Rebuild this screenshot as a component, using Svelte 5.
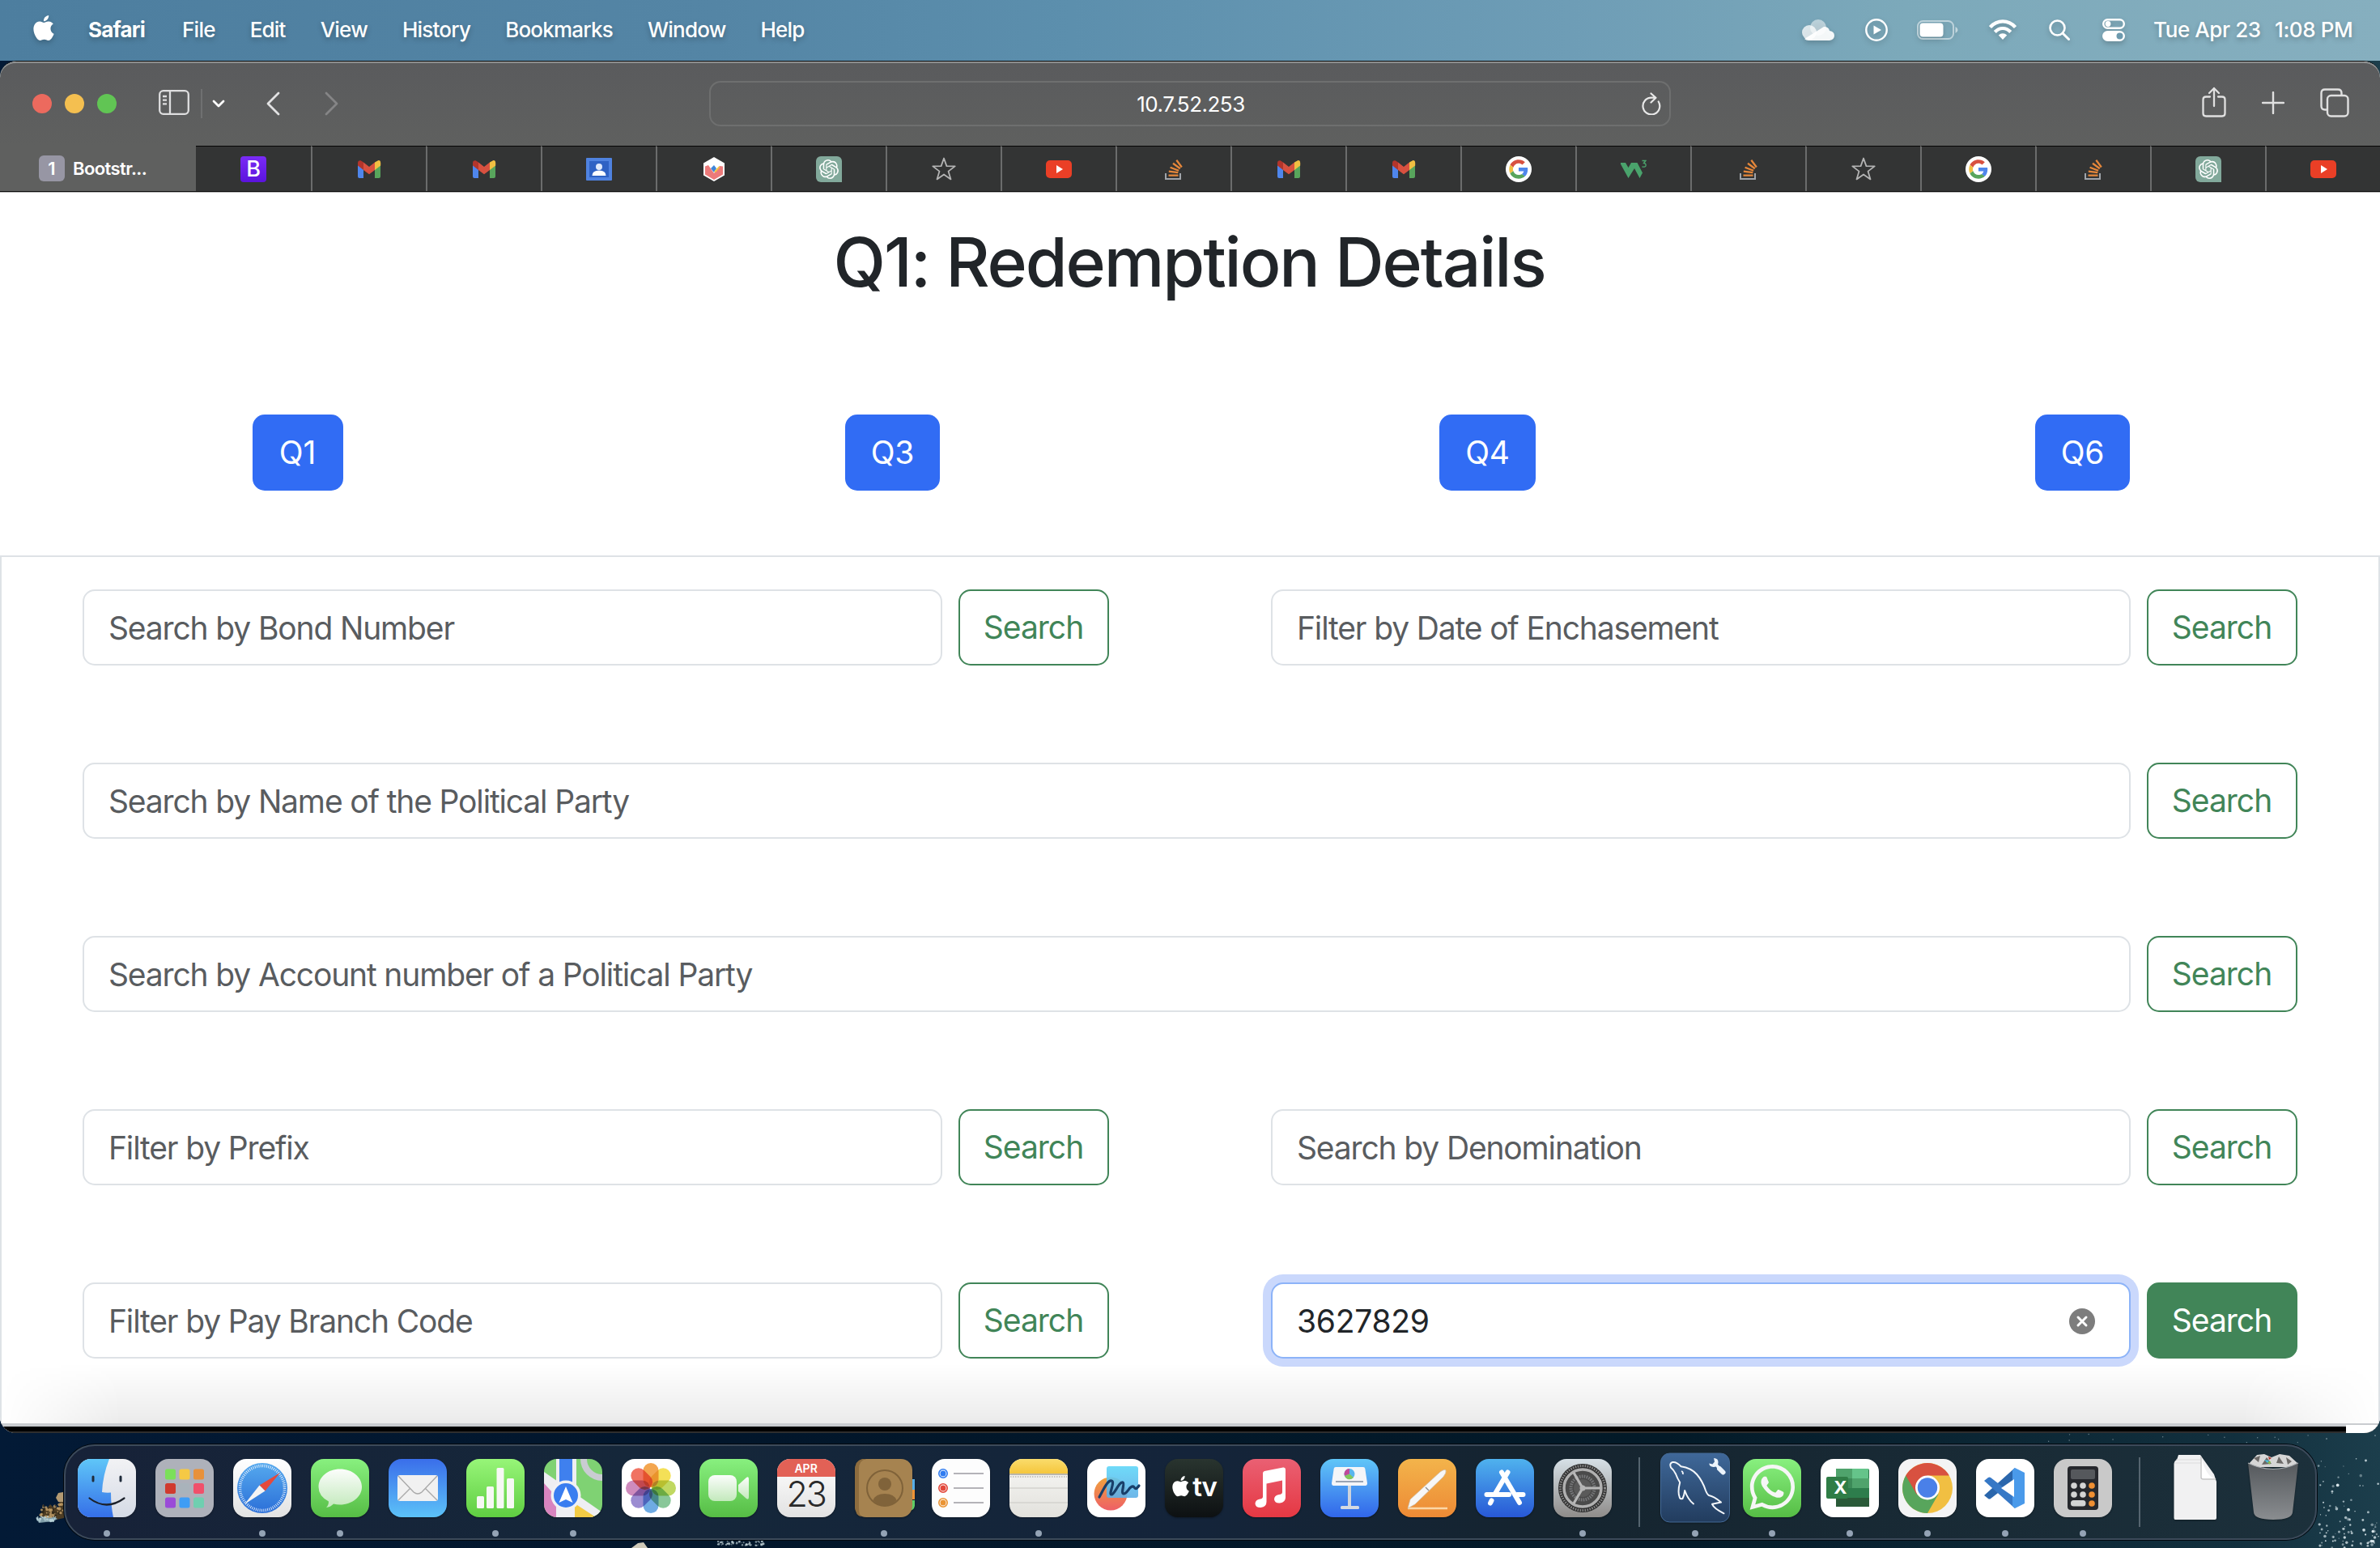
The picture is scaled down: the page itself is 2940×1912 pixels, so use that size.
<script>
  const menus = ['File', 'Edit', 'View', 'History', 'Bookmarks', 'Window', 'Help'];

  const tabs = [
    'bootstrap', 'gmail', 'gmail', 'contacts', 'cube', 'gpt', 'star', 'youtube', 'stack', 'gmail',
    'gmail', 'google', 'w3', 'stack', 'star', 'google', 'stack', 'gpt', 'youtube'
  ];

  const queries = ['Q1', 'Q3', 'Q4', 'Q6'];

  const rows = [
    [{ label: 'Search by Bond Number' }, { label: 'Filter by Date of Enchasement' }],
    [{ label: 'Search by Name of the Political Party' }],
    [{ label: 'Search by Account number of a Political Party' }],
    [{ label: 'Filter by Prefix' }, { label: 'Search by Denomination' }],
    [{ label: 'Filter by Pay Branch Code' }, { label: 'Search', value: '3627829', focus: true }]
  ];

  const dock = [
    [
      { name: 'finder', on: true }, { name: 'launchpad' }, { name: 'safari', on: true },
      { name: 'messages', on: true }, { name: 'mail' }, { name: 'numbers', on: true },
      { name: 'maps', on: true }, { name: 'photos' }, { name: 'facetime' }, { name: 'calendar' },
      { name: 'contacts', on: true }, { name: 'reminders' }, { name: 'notes', on: true },
      { name: 'freeform' }, { name: 'tv' }, { name: 'music' }, { name: 'keynote' },
      { name: 'pages' }, { name: 'appstore' }, { name: 'settings', on: true }
    ],
    [
      { name: 'mysql', on: true }, { name: 'whatsapp', on: true }, { name: 'excel', on: true },
      { name: 'chrome', on: true }, { name: 'vscode', on: true }, { name: 'calculator', on: true }
    ],
    [{ name: 'document' }, { name: 'trash' }]
  ];

  const launchColors = ['#7be05a', '#f5c945', '#e8913a', '#d03a2e', '#a9b3bb', '#f0506a', '#9a4bd8', '#3f9df5', '#6fcfb0'];
  const petals = ['#f29a38', '#f3dc3f', '#b7d34b', '#79c08b', '#5b9fe0', '#8d7ccb', '#c77bb4', '#ee5f4c'];

  // Sea spray: a small seeded generator keeps the flecks stable between loads.
  let seed = 7;
  const rnd = () => (seed = (seed * 16807) % 2147483647) / 2147483647;
  const flecks = [];
  for (let i = 0; i < 100; i++) {
    const t = rnd();
    flecks.push({ x: 2864 + rnd() * 76, y: 1772 + Math.sqrt(t) * 140, r: 0.5 + rnd() * 1.4, o: 0.35 + rnd() * 0.6, c: '#e2eef2' });
  }
  for (let i = 0; i < 14; i++) flecks.push({ x: 2530 + rnd() * 400, y: 1771 + rnd() * 11, r: 0.7, o: 0.5, c: '#d6e6ec' });
  for (let i = 0; i < 60; i++) flecks.push({ x: 885 + rnd() * 65, y: 1903 + rnd() * 6, r: 0.5 + rnd(), o: 0.6, c: '#cfe0e2' });
  for (let i = 0; i < 45; i++) flecks.push({ x: 50 + rnd() * 28, y: 1858 + rnd() * 16, r: 0.8 + rnd() * 1.2, o: 0.8, c: rnd() > 0.5 ? '#caa56c' : '#2a2418' });
  for (let i = 0; i < 40; i++) flecks.push({ x: 46 + rnd() * 24, y: 1873 + rnd() * 6, r: 0.6 + rnd(), o: 0.8, c: '#b9d3da' });

  const apple = 'M12.152 6.896c-.948 0-2.415-1.078-3.96-1.04-2.04.027-3.91 1.183-4.961 3.014-2.117 3.675-.546 9.103 1.519 12.09 1.013 1.454 2.208 3.09 3.792 3.039 1.52-.065 2.09-.987 3.935-.987 1.831 0 2.35.987 3.96.948 1.637-.026 2.676-1.48 3.676-2.948 1.156-1.688 1.636-3.325 1.662-3.415-.039-.013-3.182-1.221-3.22-4.857-.026-3.04 2.48-4.494 2.597-4.559-1.429-2.09-3.623-2.324-4.39-2.376-2-.156-3.675 1.09-4.61 1.09zM15.53 3.83c.843-1.012 1.4-2.427 1.245-3.83-1.207.052-2.662.805-3.532 1.818-.78.896-1.454 2.338-1.273 3.714 1.338.104 2.715-.688 3.559-1.701';
  const knot = 'M22.2819 9.8211a5.9847 5.9847 0 0 0-.5157-4.9108 6.0462 6.0462 0 0 0-6.5098-2.9A6.0651 6.0651 0 0 0 4.9807 4.1818a5.9847 5.9847 0 0 0-3.9977 2.9 6.0462 6.0462 0 0 0 .7427 7.0966 5.98 5.98 0 0 0 .511 4.9107 6.051 6.051 0 0 0 6.5146 2.9001A5.9847 5.9847 0 0 0 13.2599 24a6.0557 6.0557 0 0 0 5.7718-4.2058 5.9894 5.9894 0 0 0 3.9977-2.9001 6.0557 6.0557 0 0 0-.7475-7.0729zm-9.022 12.6081a4.4755 4.4755 0 0 1-2.8764-1.0408l.1419-.0804 4.7783-2.7582a.7948.7948 0 0 0 .3927-.6813v-6.7369l2.02 1.1686a.071.071 0 0 1 .038.052v5.5826a4.504 4.504 0 0 1-4.4945 4.4944zm-9.6607-4.1254a4.4708 4.4708 0 0 1-.5346-3.0137l.142.0852 4.783 2.7582a.7712.7712 0 0 0 .7806 0l5.8428-3.3685v2.3324a.0804.0804 0 0 1-.0332.0615L9.74 19.9502a4.4992 4.4992 0 0 1-6.1408-1.6464zM2.3408 7.8956a4.485 4.485 0 0 1 2.3655-1.9728V11.6a.7664.7664 0 0 0 .3879.6765l5.8144 3.3543-2.0201 1.1685a.0757.0757 0 0 1-.071 0l-4.8303-2.7865A4.504 4.504 0 0 1 2.3408 7.872zm16.5963 3.8558L13.1038 8.364 15.1192 7.2a.0757.0757 0 0 1 .071 0l4.8303 2.7913a4.4944 4.4944 0 0 1-.6765 8.1042v-5.6772a.79.79 0 0 0-.407-.667zm2.0107-3.0231l-.142-.0852-4.7735-2.7818a.7759.7759 0 0 0-.7854 0L9.409 9.2297V6.8974a.0662.0662 0 0 1 .0284-.0615l4.8303-2.7866a4.4992 4.4992 0 0 1 6.6802 4.66zM8.3065 12.863l-2.02-1.1638a.0804.0804 0 0 1-.038-.0567V6.0742a4.4992 4.4992 0 0 1 7.3757-3.4537l-.142.0805L8.704 5.459a.7948.7948 0 0 0-.3927.6813zm1.0976-2.3654l2.602-1.4998 2.6069 1.4998v2.9994l-2.5974 1.4997-2.6067-1.4997Z';
  const whatsapp = 'M17.472 14.382c-.297-.149-1.758-.867-2.03-.967-.273-.099-.471-.148-.67.15-.197.297-.767.966-.94 1.164-.173.199-.347.223-.644.075-.297-.15-1.255-.463-2.39-1.475-.883-.788-1.48-1.761-1.653-2.059-.173-.297-.018-.458.13-.606.134-.133.298-.347.446-.52.149-.174.198-.298.298-.497.099-.198.05-.371-.025-.52-.075-.149-.669-1.612-.916-2.207-.242-.579-.487-.5-.669-.51-.173-.008-.371-.01-.57-.01-.198 0-.52.074-.792.372-.272.297-1.04 1.016-1.04 2.479 0 1.462 1.065 2.875 1.213 3.074.149.198 2.096 3.2 5.077 4.487.709.306 1.262.489 1.694.625.712.227 1.36.195 1.871.118.571-.085 1.758-.719 2.006-1.413.248-.694.248-1.289.173-1.413-.074-.124-.272-.198-.57-.347m-5.421 7.403h-.004a9.87 9.87 0 01-5.031-1.378l-.361-.214-3.741.982.998-3.648-.235-.374a9.86 9.86 0 01-1.51-5.26c.001-5.45 4.436-9.884 9.888-9.884 2.64 0 5.122 1.03 6.988 2.898a9.825 9.825 0 012.893 6.994c-.003 5.45-4.437 9.884-9.885 9.884m8.413-18.297A11.815 11.815 0 0012.05 0C5.495 0 .16 5.335.157 11.892c0 2.096.547 4.142 1.588 5.945L.057 24l6.305-1.654a11.882 11.882 0 005.683 1.448h.005c6.554 0 11.89-5.335 11.893-11.893a11.821 11.821 0 00-3.48-8.413z';
</script>

{#snippet favicon(name)}
  <svg class="favicon" viewBox="0 0 32 32">
    {#if name === 'bootstrap'}
      <rect width="32" height="32" rx="4" fill="url(#g-boot)" />
    {:else if name === 'gmail'}
      <path d="M2 27V9l7 5v13H4a2 2 0 0 1-2-2z" fill="#4f86ec" />
      <path d="M30 27V9l-7 5v13h5a2 2 0 0 0 2-2z" fill="#58a55c" />
      <path d="M23 7.5 27 5.2q3-.6 3.2 3V11.500L23 17z" fill="#f1bf42" />
      <path d="M9 7.500 5.500 5.200Q2 4.900 2 8.500v3L9 17z" fill="#b3352b" />
      <path d="M9 7.500 16 13l7-5.500V17l-7 5.200L9 17z" fill="#d85140" />
    {:else if name === 'contacts'}
      <rect y="2" width="32" height="28" rx="1" fill="#4f82e0" />
      <rect x="4" y="6" width="24" height="20" fill="#2f62c4" />
      <circle cx="16" cy="13" r="4" fill="#dfe9fb" />
      <path d="M7.500 24q0-6.500 8.500-6.500t8.500 6.500z" fill="#fff" />
    {:else if name === 'cube'}
      <path d="M16 1 29 8.500v15L16 31 3 23.500v-15z" fill="#fff" />
      <path d="M5 12.500 9 11l7 10 7-9 4 .5v10L16 29 5 22.500z" fill="#ec7a7a" />
      <path d="m12 15 4-4 3 4-3 5z" fill="#3f86d8" />
      <path d="m19.500 15 3-3 .5 2-5 6-2-1z" fill="#f4c542" />
    {:else if name === 'gpt'}
      <path d="M6 0h20a6 6 0 0 1 6 6v26H6a6 6 0 0 1-6-6V6a6 6 0 0 1 6-6z" fill="#82a99b" />
      <path d={knot} transform="translate(4 4)" fill="#fff" />
    {:else if name === 'star'}
      <path d="m16 2.500 3.400 9.600 10.300.3-8.200 6.200 3 9.800L16 22.500l-8.500 5.900 3-9.800-8.200-6.200 10.300-.3z" fill="none" stroke="#b4b4b4" stroke-width="1.800" stroke-linejoin="round" />
    {:else if name === 'youtube'}
      <rect y="5" width="32" height="22" rx="5" fill="#ea3f26" />
      <path d="m13 11 8 5-8 5z" fill="#fff" />
    {:else if name === 'stack'}
      <path d="M6 21v7h18v-7" fill="none" stroke="#a0a4aa" stroke-width="2" />
      <path d="M9.500 23.700h12M9.800 18.600l11.500 1.500M11.600 13.700l10.500 4M15 8.800l8.800 6.400M19.300 4.800l6.500 8.700" stroke="#e6873a" stroke-width="2.300" fill="none" />
    {:else if name === 'google'}
      <circle cx="16" cy="16" r="16" fill="#fff" />
      <g transform="translate(4.200 4.200) scale(.49)">
        <path fill="#d85140" d="M24 9.500c3.540 0 6.710 1.220 9.210 3.600l6.850-6.850C35.900 2.380 30.470 0 24 0 14.620 0 6.510 5.380 2.560 13.220l7.980 6.190C12.430 13.720 17.740 9.500 24 9.500z" />
        <path fill="#4f86ec" d="M46.980 24.550c0-1.570-.15-3.090-.38-4.550H24v9.020h12.940c-.58 2.960-2.260 5.480-4.780 7.180l7.730 6c4.510-4.180 7.090-10.360 7.090-17.650z" />
        <path fill="#f1bf42" d="M10.530 28.590c-.48-1.450-.76-2.990-.76-4.590s.27-3.140.76-4.590l-7.980-6.190C.92 16.460 0 20.120 0 24c0 3.880.92 7.540 2.560 10.780l7.970-6.190z" />
        <path fill="#58a55c" d="M24 48c6.480 0 11.930-2.130 15.890-5.810l-7.730-6c-2.150 1.450-4.920 2.300-8.160 2.300-6.260 0-11.570-4.220-13.470-9.910l-7.980 6.190C6.510 42.620 14.620 48 24 48z" />
      </g>
    {:else if name === 'w3'}
      <path d="M-1 8h7l3.500 6L13 8h7.500l6.500 12.500-3.500 6.500-6.500-12L9.500 27z" fill="#4aa36c" />
      <path d="M26.500 5.500H31l-2.500 3q2.700.2 2.700 2.500 0 2.700-4.700 2" fill="none" stroke="#4aa36c" stroke-width="1.300" />
    {/if}
  </svg>
  {#if name === 'bootstrap'}<span class="letter-b">B</span>{/if}
{/snippet}

{#snippet appIcon(name)}
  <svg class="app" viewBox="0 0 72 72">
    {#if name === 'finder'}
      <g clip-path="url(#tile)">
        <rect width="72" height="72" fill="url(#g-finder-r)" />
        <path d="M0 0h39Q31 20 30 41q5 1 11 .5Q41 58 44 72H0z" fill="url(#g-finder)" />
      </g>
      <path d="M19 22v5M53 22v5" stroke="#1f2b3a" stroke-width="3" stroke-linecap="round" />
      <path d="M14.500 48.500q21 16 43 0" fill="none" stroke="#1c222c" stroke-width="2.200" stroke-linecap="round" />
    {:else if name === 'launchpad'}
      <rect width="72" height="72" rx="16" fill="#aeb1ba" />
      {#each launchColors as color, i}
        <rect x={12 + (i % 3) * 17.500} y={12.500 + Math.floor(i / 3) * 17.500} width="13" height="13" rx="2.500" fill={color} />
      {/each}
    {:else if name === 'safari'}
      <rect width="72" height="72" rx="16" fill="url(#g-white)" />
      <circle cx="36" cy="36" r="31" fill="url(#g-safari)" />
      <circle cx="36" cy="36" r="27.500" fill="none" stroke="#fff" stroke-width="3.600" stroke-dasharray=".9 1.500" opacity=".85" />
      <path d="M58 17 39.500 39.500 32.500 32.500z" fill="#e4493d" />
      <path d="M14 56l18.500-23.500 7 7z" fill="#f4f4f4" />
    {:else if name === 'messages'}
      <rect width="72" height="72" rx="16" fill="url(#g-green)" />
      <path d="M36 12.500c15 0 27 9.700 27 22S51 56.500 36 56.500q-4 0-8-1-4 4-9 4.500 3-3 3-7.500Q9.500 46 9.500 34.500c0-12.300 11.500-22 26.500-22z" fill="url(#g-bubble)" />
    {:else if name === 'mail'}
      <rect width="72" height="72" rx="16" fill="url(#g-mail)" />
      <rect x="11" y="20" width="50" height="32" rx="3" fill="#f1f1f1" />
      <path d="m12 21 19 20q5 4 10 0l19-20M12 51l15-15M60 51 45 36" fill="none" stroke="#a9a9a9" stroke-width="1.400" />
    {:else if name === 'numbers'}
      <rect width="72" height="72" rx="16" fill="url(#g-numbers)" />
      <g fill="#f6f8f4">
        <rect x="13" y="46" width="9" height="15" rx="1.500" /><rect x="25" y="34" width="9" height="27" rx="1.500" />
        <rect x="37.500" y="11" width="9" height="50" rx="1.500" /><rect x="50" y="24" width="9" height="37" rx="1.500" />
      </g>
    {:else if name === 'maps'}
      <g clip-path="url(#tile)">
        <rect width="72" height="72" fill="#7fd273" />
        <path d="M0 28 16 40v32H0z" fill="#d884bf" />
        <path d="M0 16 72 66v6H38L0 30z" fill="#eeeef2" />
        <path d="M15 0h25v72H15z" fill="#eeeef2" />
        <path d="M19 0h16v40H19z" fill="#3f80ee" />
        <circle cx="72" cy="0" r="23" fill="none" stroke="#c9ccd2" stroke-width="8" />
        <path d="M38 55 64 72H38z" fill="#f3cb45" />
      </g>
      <circle cx="27" cy="45" r="18.500" fill="#f1f1f4" /><circle cx="27" cy="45" r="15" fill="#3a7df0" />
      <path d="m27 34 8.500 20-8.500-4-8.500 4z" fill="#fff" />
    {:else if name === 'photos'}
      <rect width="72" height="72" rx="16" fill="#fff" />
      <g class="petals">
        {#each petals as color, i}
          <rect x="26.500" y="5" width="19" height="30" rx="9.500" fill={color} transform={`rotate(${i * 45} 36 36)`} />
        {/each}
      </g>
    {:else if name === 'facetime'}
      <rect width="72" height="72" rx="16" fill="url(#g-green)" />
      <rect x="11" y="20" width="35" height="32" rx="8" fill="url(#g-bubble)" />
      <path d="M48 32 58 23q3-2 3 2v22q0 4-3 2L48 40z" fill="url(#g-bubble)" />
    {:else if name === 'calendar'}
      <g clip-path="url(#tile)"><rect width="72" height="72" fill="url(#g-white)" /><rect width="72" height="22" fill="#e26156" /></g>
    {:else if name === 'contacts'}
      <path d="M66 9q5 2 5 7v6h-5z" fill="#d3d6da" /><path d="M66 25h8v13h-8z" fill="#56aee8" />
      <path d="M66 38h8v12h-8z" fill="#ef9336" /><path d="M66 51h8v7q-1 6-8 6z" fill="#5fce65" />
      <rect width="71" height="72" rx="14" fill="#a68350" /><path d="M14 0H9Q0 2 0 14v44q0 12 9 14-4-2-4-12V12Q5 2 14 0z" fill="#8d6c3e" />
      <circle cx="37" cy="36" r="22" fill="none" stroke="#7f6239" stroke-width="2" />
      <circle cx="37" cy="31" r="8" fill="#80633a" /><path d="M22.500 51q3-8 14.500-8t14.500 8Q45 58 37 58t-14.500-7z" fill="#80633a" />
    {:else if name === 'reminders'}
      <rect width="72" height="72" rx="16" fill="#fdfdfd" />
      {#each ['#2f7bf0', '#e2473a', '#ea9434'] as color, i}
        <circle cx="14" cy={18 + i * 18} r="5.200" fill="#fff" stroke={color} stroke-width="1.600" />
        <circle cx="14" cy={18 + i * 18} r="3.500" fill={color} />
        <path d={`M27 ${18 + i * 18}h37`} stroke="#b4b3b8" stroke-width="1.800" />
      {/each}
    {:else if name === 'notes'}
      <g clip-path="url(#tile)">
        <rect width="72" height="72" fill="url(#g-notes)" /><rect width="72" height="18" fill="url(#g-notes-top)" />
        <path d="M0 19h72" stroke="#a7a294" stroke-width="1.500" /><path d="M1 22h70" stroke="#b9b6ae" stroke-width="1.500" stroke-dasharray="1.500 1.500" />
        <path d="M0 36h72M0 54h72" stroke="#d3d2ce" stroke-width="1.500" />
      </g>
    {:else if name === 'freeform'}
      <rect width="72" height="72" rx="16" fill="#fff" />
      <circle cx="29" cy="43" r="20.500" fill="url(#g-free-o)" /><rect x="24" y="9" width="39" height="39" rx="3" fill="url(#g-free-b)" opacity=".9" />
      <path d="M15 47c4-7 10-21 15-20 5 1-4 17 0 17 4 0 9-16 14-15 3 1-3 13 1 14 5 0 7-10 12-9 2 1 2 6 7-1" fill="none" stroke="#193f69" stroke-width="3.200" stroke-linecap="round" />
    {:else if name === 'tv'}
      <rect width="72" height="72" rx="16" fill="url(#g-tv)" />
      <path d={apple} transform="translate(7 21) scale(1.050)" fill="#fff" />
    {:else if name === 'music'}
      <rect width="72" height="72" rx="16" fill="url(#g-music)" />
      <path d="M25 17.500q0-2 2-2.500l23-4.500q3-.5 3 2.500v34.500q0 6-7 7-6 .5-7-4.500 0-5 6-6 4-.5 4-3V26.500L29.500 30.500V53q0 6-7 7-6 .5-7-4.500 0-5 6-6 3.500-.5 3.500-3z" fill="#fff" />
    {:else if name === 'keynote'}
      <rect width="72" height="72" rx="16" fill="url(#g-key)" />
      <path d="M34 32h4v28h-4z" fill="#cdd3dc" /><rect x="25" y="58" width="23" height="4" rx="1.500" fill="#d5dae2" />
      <path d="M19 10h34q2 0 2.300 2L58 30q0 3-2.500 3h-39q-2.500 0-2.500-3l2.700-18q.3-2 2.300-2z" fill="#f4f5f8" />
      <path d="M19 28h34" stroke="#9aa4b4" stroke-width="2" />
      <circle cx="36" cy="18.500" r="6.500" fill="#5ab6ee" /><path d="M36 18.500V12a6.500 6.500 0 0 0-6 9z" fill="#c04a9a" /><path d="M36 18.500 30 21a6.500 6.500 0 0 0 11 2z" fill="#84c85c" />
    {:else if name === 'pages'}
      <rect width="72" height="72" rx="16" fill="url(#g-pages)" />
      <path d="M12 61h49" stroke="#fbd7a6" stroke-width="2.400" />
      <path d="M12 61 15 50 52 16q6-4 7-2 1 3-3 8L21 56z" fill="#f7f7f7" stroke="#c9b9a0" stroke-width=".7" /><path d="m34 35 4 4" stroke="#8b8b8b" stroke-width="1.200" />
    {:else if name === 'appstore'}
      <rect width="72" height="72" rx="16" fill="url(#g-store)" />
      <g stroke="#fff" stroke-width="6" stroke-linecap="round"><path d="M39.500 16.500 24.500 42M19.500 51.500l-1.500 3M32 16.500 54 54M13.500 44H41M51 44h7.500" /></g>
    {:else if name === 'settings'}
      <rect width="72" height="72" rx="16" fill="url(#g-set)" />
      <circle cx="36" cy="36" r="30" fill="#2e2e2e" /><circle cx="36" cy="36" r="27.500" fill="none" stroke="#858585" stroke-width="3" stroke-dasharray="1.600 1.400" />
      <circle cx="36" cy="36" r="23" fill="#4a4a4a" stroke="#b0b0b0" stroke-width="3.500" />
      <circle cx="36" cy="36" r="14.500" fill="none" stroke="#77787a" stroke-width="4" stroke-dasharray="1.600 1.300" /><circle cx="36" cy="36" r="11" fill="#5a5a5a" />
      <path d="M36 36h22M36 36 25 17M36 36 25 55" stroke="#b8b8b8" stroke-width="3.200" /><circle cx="36" cy="36" r="3.500" fill="#b4b4b4" />
    {:else if name === 'mysql'}
      <rect x="-6.500" y="-7" width="85" height="85" rx="11" fill="url(#g-mysql)" stroke="#446a96" />
      <path d="M34 55.500Q27 50 23.200 39q-.7 6-2.700 10-2.500 1-3.500-1-3-7 .2-19Q14 24 12 18.500 9.500 13.500 6 10.500 3.800 5.500 8 4q5-.8 10.500 5.200Q31 11 38 19q7 8 11 20 2 5 4 6 6 1 15 8.500l-11 2.300q2 5 14.500 11.500" fill="none" stroke="#f3f7fb" stroke-width="2" stroke-linejoin="round" stroke-linecap="round" />
      <path d="M19 15q2.500 1 1.800 4" fill="none" stroke="#f3f7fb" stroke-width="1.800" />
      <path d="m61 6 6 7" stroke="#ecf4fc" stroke-width="3.500" /><path d="m66 12 4.500 4.500" stroke="#ecf4fc" stroke-width="6" stroke-linecap="round" />
      <path d="M59-1q6 0 5.500 6-1 5-6 5-5-.5-5.200-4.500l4.200 1 2.500-3z" fill="#ecf4fc" />
    {:else if name === 'whatsapp'}
      <rect width="72" height="72" rx="16" fill="url(#g-green)" />
      <path d={whatsapp} transform="translate(8.500 7) scale(2.320)" fill="#f6f6f6" />
    {:else if name === 'excel'}
      <rect width="72" height="72" rx="16" fill="#fff" />
      <rect x="19" y="12" width="41" height="47" rx="2" fill="#2d7d4c" />
      <path d="M19 12h20v12H19z" fill="#4fa36c" /><path d="M39 12h20v12H39z" fill="#65c48a" /><path d="M19 24h20v12H19z" fill="#3c8a58" /><path d="M39 24h21v12H39z" fill="#4fa36c" /><path d="M19 48h41v11H19z" fill="#2a5a38" />
      <rect x="7" y="22" width="27" height="27" rx="2" fill="#2f7d46" />
    {:else if name === 'chrome'}
      <rect width="72" height="72" rx="16" fill="#f3f3f4" />
      <circle cx="36" cy="36" r="31" fill="#f1bf42" />
      <path d="M36 36 9.200 20.500A31 31 0 0 1 62.800 20.500H36z" fill="#d85140" />
      <path d="M9.200 20.500A31 31 0 0 0 36 67L49.400 43.700 36 36z" fill="#58a55c" /><path d="M9.200 20.500 22.600 43.700 36 51.500 49.400 43.700z" fill="#58a55c" /><path d="M9.200 20.500 22.600 43.700 36 20.500z" fill="#d85140" />
      <circle cx="36" cy="35.500" r="15" fill="#fff" /><circle cx="36" cy="35.500" r="12.200" fill="#4a80e8" />
    {:else if name === 'vscode'}
      <rect width="72" height="72" rx="16" fill="#fff" />
      <path d="m10 45 5 4q1.500 1 3 0L48 26V11z" fill="#2a66ac" /><path d="m10 27 5-4q1.500-1 3 0l30 23v15z" fill="#3678c6" />
      <path d="M48 11 60 17v38l-12 6-3-3V14z" fill="#4a9aea" /><path d="M47 25v22L31 36z" fill="#fff" />
    {:else if name === 'calculator'}
      <rect width="72" height="72" rx="16" fill="#c9c9c9" />
      <rect x="17" y="9" width="38" height="54" rx="4" fill="#26282d" /><rect x="21" y="13" width="30" height="12" rx="2" fill="#55585c" />
      {#each [0, 1, 2] as r}
        <circle cx="47" cy={33 + r * 11} r="3.800" fill="#f08f32" />
        {#if r < 2}<circle cx="25" cy={33 + r * 11} r="3.800" fill="#d4d4d4" /><circle cx="36" cy={33 + r * 11} r="3.800" fill="#d4d4d4" />{/if}
      {/each}
      <rect x="21" y="51" width="18.500" height="7.500" rx="3.500" fill="#d4d4d4" />
    {:else if name === 'document'}
      <path d="M15-5h27l17 24 3 9v45q0 2-2 2H11q-1.500 0-1.500-2V6Q10 2 13 1z" fill="#f1f1f2" />
      <path d="M10 5h33M12 1h31" stroke="#dcdcdc" /><path d="m43-4 1 27q0 2 3 2h15Q48 22 43-4z" fill="#fff" /><path d="M43-3v26q0 2 3 2h15" fill="none" stroke="#c5c5c5" stroke-width="1.400" />
    {:else if name === 'trash'}
      <path d="M6 6 16-5l9-1 9 4 10-4 12 2 10 9-7 5H14z" fill="#d6d6d6" />
      <path d="m12-1 8-3-2 8zM22 7l6-9 6 8zM40 5l3-8 6 9zM52-2l7 5-5 4z" fill="#6d6a68" /><path d="m25 1 6 1-2 3z" fill="#48c4e0" /><path d="m29 4 4-1-1 4z" fill="#8cc64a" /><path d="m30-3 4 2-3 2z" fill="#b1352a" />
      <path d="M5 5q31 15 62 0l-7 61q-1 9-24 9t-24-9z" fill="url(#g-trash)" />
      <path d="M5 5q31 15 62 0" fill="none" stroke="#a9adb1" stroke-width="1.200" />
    {/if}
  </svg>
  {#if name === 'calendar'}<span class="cal-month">APR</span><span class="cal-day">23</span>{/if}
  {#if name === 'tv'}<span class="tv-word">tv</span>{/if}
  {#if name === 'excel'}<span class="excel-x">X</span>{/if}
{/snippet}

{#snippet grad(id, a, b)}
  <linearGradient {id} x1="0" y1="0" x2="0" y2="1"><stop offset="0" stop-color={a} /><stop offset="1" stop-color={b} /></linearGradient>
{/snippet}

<svg class="defs" aria-hidden="true">
  <defs>
    <clipPath id="tile"><rect width="72" height="72" rx="16" /></clipPath>
    {@render grad('g-boot', '#7a2bf5', '#5b13dd')}
    {@render grad('g-finder', '#5fc6f8', '#356fe8')}
    {@render grad('g-finder-r', '#f2f2f4', '#d5dbe6')}
    {@render grad('g-white', '#ffffff', '#e2e2e2')}
    {@render grad('g-safari', '#55a9ee', '#2b6fd8')}
    {@render grad('g-green', '#88f07f', '#56bd45')}
    {@render grad('g-bubble', '#fbfdfb', '#c3e9bc')}
    {@render grad('g-mail', '#3a6eea', '#5cc2f8')}
    {@render grad('g-numbers', '#97f578', '#5fce42')}
    {@render grad('g-notes', '#f8f8f6', '#e2e1dc')}
    {@render grad('g-notes-top', '#fadc6c', '#f5c63c')}
    {@render grad('g-free-o', '#f0a33c', '#ee5f66')}
    {@render grad('g-free-b', '#5fd6f8', '#5eaee6')}
    {@render grad('g-tv', '#29342f', '#0d1012')}
    {@render grad('g-music', '#ea6073', '#e53843')}
    {@render grad('g-key', '#60c6f8', '#3166ea')}
    {@render grad('g-pages', '#f3b44b', '#ed8a35')}
    {@render grad('g-store', '#4fb2ee', '#2858d6')}
    {@render grad('g-set', '#d6e0e6', '#8f8c8a')}
    {@render grad('g-mysql', '#3f6899', '#223c5e')}
    {@render grad('g-trash', '#55595d', '#8a8d90')}
  </defs>
</svg>

<div class="desktop">
  <svg class="sea" viewBox="0 0 2940 1912" aria-hidden="true">
    <path d="m69 1850 3-6 6-1v13l-6-1z" fill="#b39a72" />
    <path d="m50 1874 3-9 6-3 3-4 4 4 6 1 2-8h5v20l-14 3z" fill="#4d3d24" />
    <path d="m46 1877 10-4 12 1 3 2-5 3-18 2z" fill="#7f9da8" />
    <path d="m780 1912 8-6 7-1 5 7z" fill="#cfc9b8" />
    {#each flecks as f}<circle cx={f.x} cy={f.y} r={f.r} opacity={f.o} fill={f.c} />{/each}
  </svg>

  <header class="menubar">
    <nav class="menus">
      <svg class="apple" viewBox="2 0 20 24"><path d={apple} fill="#fff" /></svg>
      <b>Safari</b>
      {#each menus as item}<span>{item}</span>{/each}
    </nav>
    <div class="status">
      <svg class="cloud" viewBox="0 0 40 26">
        <circle cx="20" cy="10" r="10" fill="#fff" opacity=".5" /><circle cx="9" cy="16" r="9" fill="#fff" opacity=".75" />
        <path d="M3 24 27 9q6 0 7 5 6 1 6 6t-6 6H8q-3 0-5-2z" fill="#fff" opacity=".93" />
      </svg>
      <svg class="play" viewBox="0 0 28 28"><circle cx="14" cy="14" r="12.700" fill="none" stroke="#fff" stroke-width="2.400" /><path d="m10.500 8.500 9.500 5.500-9.500 5.500z" fill="#fff" /></svg>
      <svg class="battery" viewBox="0 0 50 24"><rect x="1" y="1" width="44" height="22" rx="6.500" fill="none" stroke="#fff" stroke-width="2" opacity=".5" /><rect x="3.500" y="3.500" width="29" height="17" rx="4" fill="#fff" /><path d="M47.500 8q3 1.500 3 4t-3 4z" fill="#fff" opacity=".55" /></svg>
      <svg class="wifi" viewBox="0 0 34 25"><g fill="none" stroke="#fff" stroke-width="4.200"><path d="M1.500 9.500Q8 2.300 17 2.300t15.500 7.200" /><path d="M7.300 15.500Q11.500 11 17 11t9.700 4.500" /></g><path d="M17 25l-5.200-5.600Q14 17.300 17 17.300t5.200 2.100z" fill="#fff" /></svg>
      <svg class="spot" viewBox="0 0 26 26"><circle cx="10.500" cy="10.500" r="9" fill="none" stroke="#fff" stroke-width="2.600" /><path d="m17 17 7.500 7.500" stroke="#fff" stroke-width="3" stroke-linecap="round" /></svg>
      <svg class="control" viewBox="0 0 28 28"><rect x="1.200" y="1.200" width="25.600" height="10.600" rx="5.300" fill="none" stroke="#fff" stroke-width="2.400" /><circle cx="7" cy="6.500" r="3.400" fill="#fff" /><rect y="15" width="28" height="13" rx="6.500" fill="#fff" /><circle cx="21.500" cy="21.500" r="4" fill="#6d9aae" /></svg>
      <span class="date">Tue Apr 23</span><span class="time">1:08 PM</span>
    </div>
  </header>

  <main class="window">
    <div class="toolbar">
      <div class="left">
        <i class="light red"></i><i class="light yellow"></i><i class="light green"></i>
        <svg class="sidebar" viewBox="0 0 38 31" fill="none" stroke="#dededf" stroke-width="2.300"><rect x="1.200" y="1.200" width="35.600" height="28.600" rx="4.500" /><path d="M14 1v29M5 8h5M5 12.700h5M5 17.400h5" /></svg>
        <i class="rule"></i>
        <svg class="down" viewBox="0 0 16 10"><path d="m2 2 6 6 6-6" fill="none" stroke="#fff" stroke-width="2.800" stroke-linecap="round" stroke-linejoin="round" /></svg>
        <svg class="arrow" viewBox="0 0 18 30"><path d="M16 2 3 15l13 13" fill="none" stroke="#e2e2e3" stroke-width="2.800" stroke-linecap="round" stroke-linejoin="round" /></svg>
        <svg class="arrow" viewBox="0 0 18 30"><path d="m2 2 13 13L2 28" fill="none" stroke="#858586" stroke-width="2.800" stroke-linecap="round" stroke-linejoin="round" /></svg>
      </div>
      <div class="address">
        <span>10.7.52.253</span>
        <svg class="reload" viewBox="0 0 24 28"><path d="M20.700 11.500A10.400 10.400 0 1 1 12 6.600h3M11.500 1.500l6 5.300-6 5.700" fill="none" stroke="#e8e8e8" stroke-width="2.200" stroke-linecap="round" stroke-linejoin="round" /></svg>
      </div>
      <div class="right">
        <svg class="share" viewBox="0 0 30 38" fill="none" stroke="#e0e0e0" stroke-width="2.300" stroke-linecap="round" stroke-linejoin="round"><path d="M10 12.500H5q-3.500 0-3.500 3.500v17q0 3.500 3.500 3.500h20q3.500 0 3.500-3.500V16q0-3.500-3.500-3.500h-5M15 24V2M9 8l6-6 6 6" /></svg>
        <svg class="plus" viewBox="0 0 28 28"><path d="M14 1v26M1 14h26" stroke="#e0e0e0" stroke-width="2.400" stroke-linecap="round" /></svg>
        <svg class="overview" viewBox="0 0 36 36" fill="none" stroke="#e0e0e0" stroke-width="2.400"><rect x="9" y="9" width="25.500" height="25.500" rx="4.500" /><path d="M8.500 26.500H6q-4.500 0-4.500-4.500V6q0-4.500 4.500-4.500h16q4.500 0 4.500 4.500v2.500" /></svg>
      </div>
    </div>

    <div class="tabs">
      <div class="tab current"><span class="badge">1</span><span class="caption">Bootstr...</span></div>
      {#each tabs as tab}
        <div class="tab">{@render favicon(tab)}</div>
      {/each}
    </div>

    <section class="page">
      <h1>Q1: Redemption Details</h1>
      <nav class="queries">
        {#each queries as q}<div><button class="primary">{q}</button></div>{/each}
      </nav>
      <div class="filters">
        {#each rows as row}
          <div class="row">
            {#each row as field}
              <form class="field">
                <div class="control-wrap">
                  <input class:focus={field.focus} type="text" placeholder={field.label} value={field.value ?? ''} />
                  {#if field.focus}
                    <svg class="clear" viewBox="0 0 32 32"><circle cx="16" cy="16" r="16" fill="#7d7d7d" /><path d="m11 11 10 10M21 11 11 21" stroke="#fff" stroke-width="3" stroke-linecap="round" /></svg>
                  {/if}
                </div>
                <button class="outline" class:active={field.focus} type="button">Search</button>
              </form>
            {/each}
          </div>
        {/each}
      </div>
      <div class="shade"></div>
      <div class="edge"><i></i></div>
    </section>
  </main>

  <footer class="dock">
    {#each dock as group, g}
      {#if g}<i class="sep"></i>{/if}
      {#each group as app}
        <div class="slot">{@render appIcon(app.name)}{#if app.on}<i class="dot"></i>{/if}</div>
      {/each}
    {/each}
  </footer>
</div>

<style>
  :global(body) { margin: 0; overflow: hidden; }
  * { box-sizing: border-box; }
  svg { display: block; flex: none; }
  i { display: block; flex: none; }
  .defs { position: absolute; width: 0; height: 0; }

  .desktop {
    position: relative;
    width: 2940px;
    height: 1912px;
    display: flex;
    flex-direction: column;
    align-items: center;
    overflow: hidden;
    font-family: Inter, 'Liberation Sans', sans-serif;
    background: linear-gradient(90deg, #031a36 0, #02162b 30%, #031a28 70%, #12303e 94%, #1c3e4c 100%);
  }
  .sea { position: absolute; inset: 0; }

  .menubar {
    position: relative;
    width: 100%;
    height: 75px;
    flex: none;
    display: flex;
    justify-content: space-between;
    color: #fff;
    font-size: 26px;
    line-height: 73px;
    white-space: nowrap;
    text-shadow: 0 3px 6px rgb(0 0 0 / 25%);
    background: linear-gradient(90deg, #4d7e9f 0, #5485a5 30%, #5c8fad 45%, #6e9db6 66%, #7ca9ba 80%, #86afbf 100%);
  }
  .menubar svg { filter: drop-shadow(0 3px 3px rgb(0 0 0 / 20%)); }
  .menus { display: flex; gap: 43px; padding-left: 41px; font-weight: 500; letter-spacing: -0.78px; }
  .menus b { font-weight: 700; letter-spacing: -0.8px; margin-right: 3px; }
  .apple { width: 26px; height: 31px; margin: 19px -1px 0 0; }
  .status { display: flex; align-items: center; padding-right: 33px; font-weight: 500; height: 73px; }
  .cloud { width: 40px; height: 26px; margin-right: 38px; }
  .play { width: 28px; height: 28px; margin-right: 36px; }
  .battery { width: 50px; height: 24px; margin-right: 39px; overflow: visible; }
  .wifi { width: 34px; height: 25px; margin-right: 40px; }
  .spot { width: 26px; height: 26px; margin-right: 40px; }
  .control { width: 28px; height: 28px; margin-right: 35px; }
  .date { width: 150px; letter-spacing: -0.4px; }
  .time { width: 97px; letter-spacing: -0.4px; }

  .window {
    position: relative;
    width: 100%;
    height: 1695px;
    flex: none;
    display: flex;
    flex-direction: column;
    overflow: hidden;
    border-radius: 20px;
    border-top: 1px solid #111;
    background: #fff;
  }
  .toolbar {
    height: 104px;
    flex: none;
    display: grid;
    grid-template-columns: 1fr 1188px 1fr;
    border-top: 2px solid #8b8c8c;
    border-radius: 20px 20px 0 0;
    background: linear-gradient(#5a5b5d, #5f605f);
    box-shadow: 0 0 0 20px #3b5a6c;
  }
  .left { display: flex; align-items: center; padding-left: 40px; height: 99px; }
  .light { width: 24px; height: 24px; border-radius: 50%; margin-right: 16px; }
  .red { background: #ec6a5e; }
  .yellow { background: #f4bf50; }
  .green { background: #61c554; }
  .sidebar { width: 38px; height: 31px; margin: -2px 14px 0 36px; }
  .rule { width: 2px; height: 36px; background: #6f7071; }
  .down { width: 16px; height: 10px; margin: 0 50px 0 12px; }
  .arrow { width: 18px; height: 30px; margin-right: 55px; }
  .address {
    position: relative;
    height: 56px;
    margin-top: 22px;
    display: flex;
    align-items: center;
    justify-content: center;
    border: 2px solid #6e6f6f;
    border-radius: 14px;
    color: #fff;
    font-size: 26px;
    letter-spacing: -0.5px;
  }
  .address span { margin-left: 2px; }
  .reload { position: absolute; right: 10px; top: 12px; width: 24px; height: 28px; }
  .right { display: flex; justify-content: flex-end; padding-right: 38px; }
  .share { width: 30px; height: 38px; margin: 29px 44px 0 0; }
  .plus { width: 28px; height: 28px; margin: 35px 44px 0 0; }
  .overview { width: 36px; height: 36px; margin-top: 31px; }

  .tabs {
    position: relative;
    height: 57px;
    flex: none;
    display: flex;
    border-bottom: 1px solid #0c0c0c;
  }
  .tab {
    position: relative;
    width: 142px;
    flex: none;
    display: flex;
    align-items: center;
    justify-content: center;
    background: #333434;
    border-top: 1px solid #050505;
    border-left: 2px solid #6b6c6c;
  }
  .tab.current {
    width: 242px;
    justify-content: flex-start;
    gap: 10px;
    padding-left: 48px;
    background: #5f605f;
    border: 0;
    color: #fff;
    font-size: 22px;
    font-weight: 600;
  }
  .tab.current + .tab { border-left: 0; }
  .badge { width: 32px; height: 32px; border-radius: 6px; background: #9796a4; text-align: center; line-height: 32px; }
  .caption { letter-spacing: -0.6px; }
  .favicon { width: 32px; height: 32px; }
  .letter-b { position: absolute; color: #fff; font-size: 27px; font-weight: 500; }

  .page {
    position: relative;
    flex: 1;
    display: flex;
    flex-direction: column;
    border-top: 1px solid #b9b9b9;
    background: #fff;
    color: #212529;
  }
  h1 {
    margin: 0;
    height: 274px;
    padding: 34px 2px 0 0;
    text-align: center;
    font-size: 84px;
    font-weight: 500;
    line-height: 104px;
    letter-spacing: -2.1px;
  }
  .queries { height: 174px; display: grid; grid-template-columns: repeat(4, 1fr); justify-items: center; }
  button {
    height: 94px;
    border-radius: 15px;
    border: 2px solid transparent;
    font: 400 39px/86px Inter, 'Liberation Sans', sans-serif;
    letter-spacing: -1px;
    padding: 0 30px;
  }
  .primary { min-width: 112px; padding: 0 30px; letter-spacing: -0.2px; background: #316cf4; color: #fff; }
  .filters {
    flex: 1;
    display: flex;
    flex-direction: column;
    gap: 120px;
    padding: 40px 100px 0;
    border: 2px solid #dee2e6;
    border-bottom: 0;
  }
  .row { display: grid; grid-auto-flow: column; grid-auto-columns: 1fr; gap: 200px; }
  .field { display: flex; gap: 20px; }
  .control-wrap { position: relative; flex: 1; }
  input {
    width: 100%;
    height: 94px;
    padding: 0 30px;
    border: 2px solid #dee2e6;
    border-radius: 15px;
    outline: 0;
    background: #fff;
    color: #212529;
    font: 400 39px Inter, 'Liberation Sans', sans-serif;
    letter-spacing: -1.15px;
  }
  input::placeholder { color: #595c5f; opacity: 1; }
  input.focus { position: relative; border-color: #8cb3f8; box-shadow: 0 0 0 10px #cad8fc; letter-spacing: -0.3px; }
  .clear { position: absolute; right: 44px; top: 32px; width: 32px; height: 32px; }
  .outline { width: 186px; padding: 0 1px 0 0; background: #fff; border-color: #418558; color: #418558; }
  .outline.active { background: #418558; color: #fff; }

  /* The dock shades the foot of the page. */
  .shade {
    position: absolute;
    inset: auto 0 12px 0;
    height: 74px;
    background: linear-gradient(transparent, rgb(0 0 0 / 8%));
    mask-image: linear-gradient(90deg, transparent 0, #000 150px, #000 calc(100% - 170px), transparent 100%);
  }
  .edge {
    position: absolute;
    inset: auto 0 0 0;
    height: 12px;
    background:
      linear-gradient(#2e2e2e, #2e2e2e) 0 100% / 100% 2px no-repeat,
      linear-gradient(#c9ccd0, #c9ccd0) 0 0 / 100% 4px no-repeat,
      #000;
  }
  .edge i { width: 42px; height: 10px; margin: 2px 0 0 auto; background: #fff; }

  .dock {
    position: relative;
    width: 2783px;
    height: 118px;
    margin-top: 14px;
    flex: none;
    display: flex;
    padding: 16px 0 0 4px;
    border: 2px solid #3c4a5a;
    border-radius: 38px;
    background: linear-gradient(90deg, #172238, #15273a 25%, #14243a 50%, #15242f 66%, #1c303b);
    box-shadow: 0 0 0 1px #02080e;
  }
  .slot { position: relative; width: 95.92px; flex: none; display: flex; flex-direction: column; align-items: center; }
  .app { width: 72px; height: 72px; overflow: visible; filter: drop-shadow(0 1px 1px rgb(0 0 0 / 35%)); }
  .petals { mix-blend-mode: multiply; opacity: .88; }
  .petals rect { mix-blend-mode: multiply; }
  .dot { width: 8px; height: 8px; margin-top: 16px; border-radius: 50%; background: #94a3b5; }
  .sep { width: 2px; height: 86px; margin: -2px 20px 0 21px; background: #55646f; }
  .cal-month, .cal-day, .tv-word, .excel-x { position: absolute; left: 0; width: 100%; text-align: center; line-height: 1; }
  .cal-month { top: 5px; color: #fff; font-size: 14px; font-weight: 600; }
  .cal-day { top: 22px; color: #2a2a2a; font-size: 43px; font-weight: 300; letter-spacing: -2px; }
  .tv-word { top: 18px; left: 13px; color: #fff; font-size: 33px; font-weight: 600; letter-spacing: -1px; }
  .excel-x { top: 24px; left: -12px; color: #fff; font-size: 22px; font-weight: 700; }
</style>
